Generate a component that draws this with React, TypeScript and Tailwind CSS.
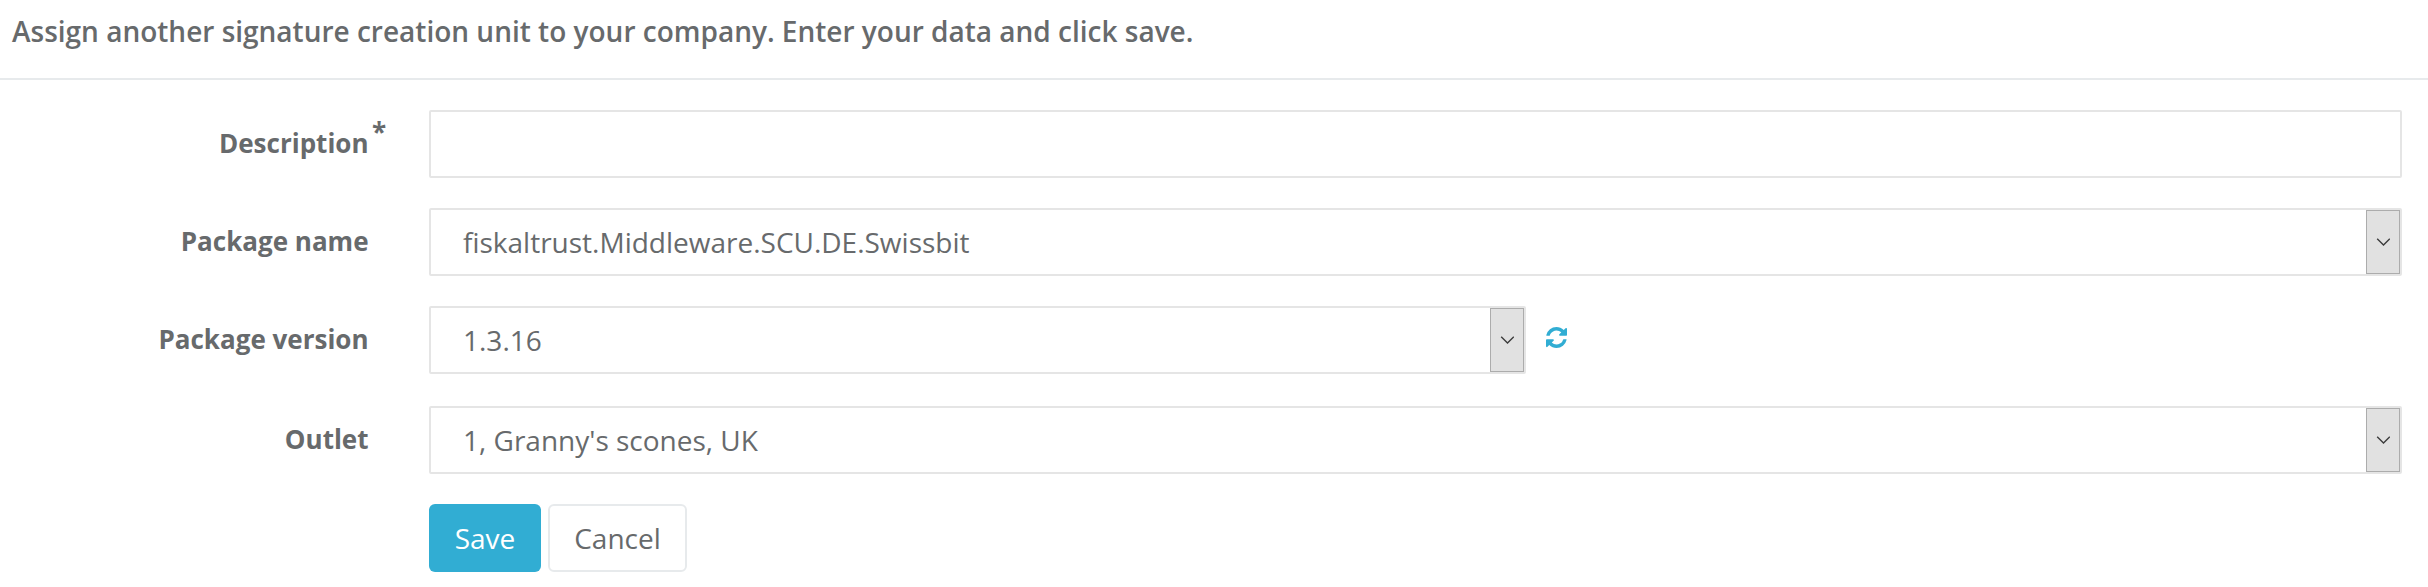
import React, { useState } from "react";

function Chevron() {
  return (
    <span className="flex w-[34px] shrink-0 items-center justify-center border border-[#acacac] bg-[#e1e1e1]">
      <svg width="14" height="8" viewBox="0 0 14 8" fill="none" stroke="#3c3c3c" strokeWidth="1.4">
        <path d="M1.2 0.7 7.5 6.9 13.8 0.7" />
      </svg>
    </span>
  );
}

function Select({ value, className = "" }: { value: string; className?: string }) {
  return (
    <button
      type="button"
      className={`flex h-[68px] items-stretch rounded-[2px] border-2 border-[#e5e5e5] bg-white text-left ${className}`}
    >
      <span className="flex-1 pl-8 text-[28px] leading-[64px]">{value}</span>
      <Chevron />
    </button>
  );
}

function Row({ label, required, children }: { label: string; required?: boolean; children: React.ReactNode }) {
  return (
    <div className="flex h-[68px]">
      <label className="relative mr-[60.5px] w-[368.5px] shrink-0 text-right text-[26px] font-bold leading-[66px]">
        {label}
        {required && <span className="absolute left-[372px] top-[-11px]">*</span>}
      </label>
      <div className="flex flex-1">{children}</div>
    </div>
  );
}

function RefreshIcon() {
  return (
    <svg width="21" height="21" viewBox="0 0 1536 1536" fill="#31add3">
      <path d="M1511 928q0 5-1 7-64 268-268 434.5t-478 166.5q-146 0-282.5-55t-243.5-157l-129 129q-19 19-45 19t-45-19-19-45v-448q0-26 19-45t45-19h448q26 0 45 19t19 45-19 45l-137 137q71 66 161 102t187 36q134 0 250-65t186-179q11-17 53-117 8-23 30-23h192q13 0 22.5 9.5t9.5 22.5zm25-800v448q0 26-19 45t-45 19h-448q-26 0-45-19t-19-45 19-45l138-138q-148-137-349-137-134 0-250 65t-186 179q-11 17-53 117-8 23-30 23h-199q-13 0-22.5-9.5t-9.5-22.5v-7q65-268 270-434.5t480-166.5q146 0 284 55.5t245 156.5l130-129q19-19 45-19t45 19 19 45z" />
    </svg>
  );
}

export default function App() {
  const [description, setDescription] = useState("");
  return (
    <div className="h-[587px] bg-white font-['Open_Sans',sans-serif] text-[#676a6c]">
      <h1 className="h-20 border-b-2 border-[#e7eaec] pl-3 text-[28px] font-semibold leading-[62px]">
        Assign another signature creation unit to your company. Enter your data and click save.
      </h1>
      <form className="flex flex-col pr-[26px] pt-[30px]">
        <Row label="Description" required>
          <input
            value={description}
            onChange={(e) => setDescription(e.target.value)}
            className="h-[68px] flex-1 rounded-[2px] border-2 border-[#e5e5e5] bg-white px-8 text-[28px] outline-none"
          />
        </Row>
        <div className="mt-[30px]">
          <Row label="Package name">
            <Select value="fiskaltrust.Middleware.SCU.DE.Swissbit" className="flex-1" />
          </Row>
        </div>
        <div className="mt-[30px]">
          <Row label="Package version">
            <Select value="1.3.16" className="w-[1097px]" />
            <button type="button" className="ml-5 mt-[21px] h-[21px]">
              <RefreshIcon />
            </button>
          </Row>
        </div>
        <div className="mt-8">
          <Row label="Outlet">
            <Select value="1, Granny's scones, UK" className="flex-1" />
          </Row>
        </div>
        <div className="ml-[429px] mt-[30px] flex gap-[7px] text-[28px]">
          <button type="button" className="h-[68px] w-28 rounded-md bg-[#31add3] text-white">
            Save
          </button>
          <button type="button" className="h-[68px] w-[139px] rounded-md border-2 border-[#e7eaec] bg-white">
            Cancel
          </button>
        </div>
      </form>
    </div>
  );
}
